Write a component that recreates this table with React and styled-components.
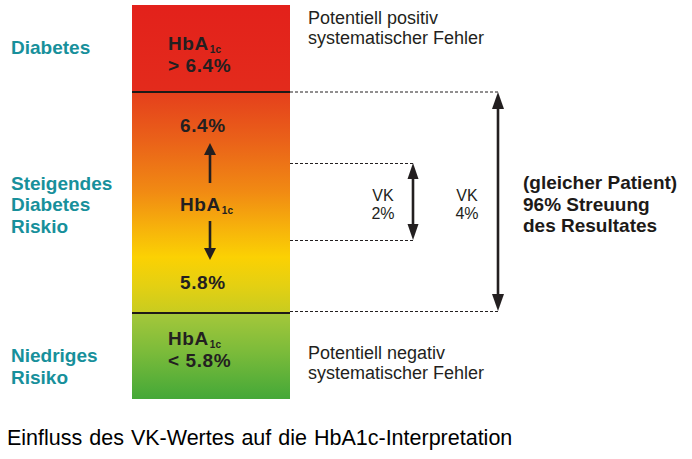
import styled, { createGlobalStyle } from 'styled-components'

const GlobalStyle = createGlobalStyle`
  body {
    margin: 0;
    background: #fff;
    font-family: "Liberation Sans", Arial, sans-serif;
  }
`

const Arrow = ({ dir, height, x = 7 }) => {
  const up = dir === 'up'
  return (
    <ArrowSvg width='14' height={height} viewBox={`0 0 14 ${height}`}>
      {up ? (
        <>
          <polygon points={`${x},0 ${x - 6},12 ${x + 6},12`} fill='#231f20' />
          <line x1={x} y1='10' x2={x} y2={height} stroke='#231f20' strokeWidth='2.6' />
        </>
      ) : (
        <>
          <line x1={x} y1='0' x2={x} y2={height - 10} stroke='#231f20' strokeWidth='2.6' />
          <polygon points={`${x},${height} ${x - 6},${height - 12} ${x + 6},${height - 12}`} fill='#231f20' />
        </>
      )}
    </ArrowSvg>
  )
}

const HbA = () => (
  <Value>
    HbA<Sub>1c</Sub>
  </Value>
)

const App = () => {
  return (
    <Page>
      <GlobalStyle />
      <Chart>
        <RiskLabel>Diabetes</RiskLabel>
        <BarCell $bg='linear-gradient(#e3211b, #e32b1c)' $pt={28} $pl={36}>
          <HbA />
          <Value>&gt; 6.4%</Value>
        </BarCell>
        <Note $pt={3}>
          Potentiell positiv
          <br />
          systematischer Fehler
        </Note>

        <RiskLabel $pt={7}>
          Steigendes
          <br />
          Diabetes
          <br />
          Riskio
        </RiskLabel>
        <BarCell
          $divider
          $pt={22}
          $pl={48}
          $bg='linear-gradient(#e5401c 0%, #ea6219 22%, #f18a13 45%, #f7b30b 62%, #fbd103 75%, #e4d012 88%, #c9cc1f 100%)'
        >
          <Value>6.4%</Value>
          <ArrowSlot $mt={6}>
            <Arrow dir='up' height={40} />
          </ArrowSlot>
          <Spaced $mt={11}>
            <HbA />
          </Spaced>
          <ArrowSlot $mt={5}>
            <Arrow dir='down' height={39} />
          </ArrowSlot>
          <Spaced $mt={12}>
            <Value>5.8%</Value>
          </Spaced>
        </BarCell>
        <Annot>
          <Lines width='402' height='221' viewBox='0 0 402 221'>
            <g stroke='#231f20' strokeWidth='1' strokeDasharray='3 2' fill='none'>
              <line x1='0' y1='1' x2='208' y2='1' />
              <line x1='0' y1='72.5' x2='123' y2='72.5' />
              <line x1='0' y1='149.5' x2='123' y2='149.5' />
              <line x1='0' y1='220.5' x2='208' y2='220.5' />
            </g>
            <g fill='#231f20'>
              <line x1='208' y1='14' x2='208' y2='207' stroke='#231f20' strokeWidth='2.6' />
              <polygon points='208,1 202,18 214,18' />
              <polygon points='208,220 202,203 214,203' />
              <line x1='123' y1='84' x2='123' y2='138' stroke='#231f20' strokeWidth='2.6' />
              <polygon points='123,72 117.5,88 128.5,88' />
              <polygon points='123,149 117.5,133 128.5,133' />
            </g>
          </Lines>
          <AnnotRow>
            <span />
            <Vk>
              VK
              <br />
              2%
            </Vk>
            <span />
            <Vk>
              VK
              <br />
              4%
            </Vk>
            <Summary>
              (gleicher Patient)
              <br />
              96% Streuung
              <br />
              des Resultates
            </Summary>
          </AnnotRow>
        </Annot>

        <RiskLabel $pt={22}>
          Niedriges
          <br />
          Risiko
        </RiskLabel>
        <BarCell $divider $pt={14} $pl={36} $bg='linear-gradient(#a4c73a, #7bbb3a 45%, #44a838)'>
          <HbA />
          <Value>&lt; 5.8%</Value>
        </BarCell>
        <Note $pt={31}>
          Potentiell negativ
          <br />
          systematischer Fehler
        </Note>
      </Chart>
      <Caption>Einfluss des VK-Wertes auf die HbA1c-Interpretation</Caption>
    </Page>
  )
}

const Page = styled.div`
  width: 692px;
  height: 459px;
  overflow: hidden;
  background: #fff;
`

const Chart = styled.div`
  display: grid;
  grid-template-columns: 132px 158px 1fr;
  grid-template-rows: 86px 221px 87px;
  padding-top: 5px;
`

const RiskLabel = styled.div`
  display: flex;
  align-items: center;
  box-sizing: border-box;
  padding: ${(p) => p.$pt || 0}px 0 0 11px;
  color: #17909b;
  font-size: 19px;
  font-weight: bold;
  line-height: 21.5px;
`

const BarCell = styled.div`
  display: flex;
  flex-direction: column;
  align-items: flex-start;
  box-sizing: border-box;
  padding: ${(p) => p.$pt}px 0 0 ${(p) => p.$pl}px;
  background: ${(p) => p.$bg};
  border-top: ${(p) => (p.$divider ? '2px solid #1e1a17' : 'none')};
`

const Value = styled.div`
  height: 22px;
  color: #231f20;
  font-size: 19px;
  font-weight: bold;
  line-height: 22px;
  letter-spacing: 0.6px;
  white-space: nowrap;
`

const Sub = styled.span`
  position: relative;
  top: 3px;
  margin-left: 1px;
  font-size: 10px;
  line-height: 0;
  letter-spacing: 0;
`

const Spaced = styled.div`
  margin-top: ${(p) => p.$mt}px;
`

const ArrowSlot = styled.div`
  margin-top: ${(p) => p.$mt}px;
  margin-left: 23px;
  line-height: 0;
`

const ArrowSvg = styled.svg`
  display: block;
`

const Note = styled.div`
  box-sizing: border-box;
  padding: ${(p) => p.$pt}px 0 0 18px;
  color: #231f20;
  font-size: 18px;
  line-height: 20px;
  white-space: nowrap;
`

const Annot = styled.div`
  position: relative;
`

const Lines = styled.svg`
  position: absolute;
  top: 0;
  left: 0;
  overflow: visible;
`

const AnnotRow = styled.div`
  position: relative;
  display: grid;
  grid-template-columns: 73px 40px 44px 40px auto;
  align-items: center;
  box-sizing: border-box;
  height: 100%;
  padding-top: 6px;
`

const Vk = styled.div`
  color: #231f20;
  font-size: 16px;
  line-height: 18px;
  text-align: center;
`

const Summary = styled.div`
  padding-left: 36px;
  color: #1d1a18;
  font-size: 19px;
  font-weight: bold;
  line-height: 21.5px;
  white-space: nowrap;
`

const Caption = styled.div`
  margin-top: 27px;
  padding-left: 7px;
  color: #000;
  font-size: 21.5px;
  line-height: 24px;
  word-spacing: 1px;
`

export default App
